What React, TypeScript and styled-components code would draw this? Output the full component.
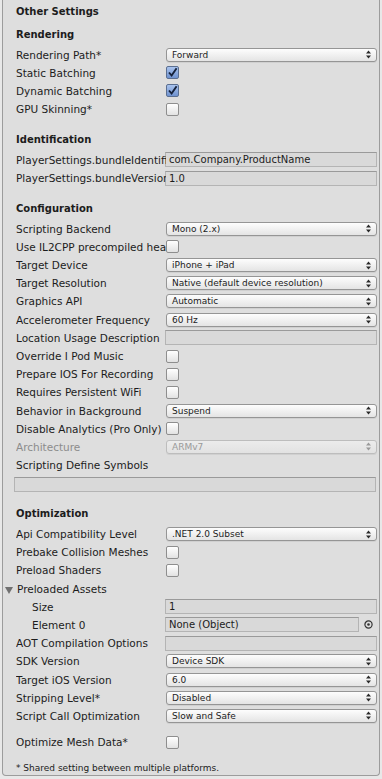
import styled, { createGlobalStyle } from 'styled-components';

const GlobalStyle = createGlobalStyle`
  html, body {
    margin: 0;
    padding: 0;
    background: #e8e8e8;
  }
  body {
    font-family: "DejaVu Sans", "Noto Sans", sans-serif;
    color: #1c1c1c;
  }
`

const Panel = styled.div`
  box-sizing: border-box;
  height: 776px;
  margin: 0 2px;
  padding: 3px 2px 0 13px;
  background: #dedede;
  border: 1px solid #9c9c9c;
  border-top: none;
  border-radius: 0 0 4px 4px;
  overflow: hidden;
`
const Title = styled.div`
  height: 18px;
  line-height: 18px;
  font-size: 10px;
  font-weight: bold;
`
const Section = styled.div<{ $first?: boolean }>`
  margin-top: ${p => (p.$first ? 5 : 13)}px;
`
const SectionHeader = styled.div`
  height: 18px;
  line-height: 18px;
  margin-bottom: 1.5px;
  font-size: 10px;
  font-weight: bold;
`
const Row = styled.div<{ $gap?: number }>`
  display: grid;
  grid-template-columns: 150px 1fr;
  align-items: center;
  height: 18.2px;
  margin-top: ${p => p.$gap ?? 0}px;
`
const Label = styled.div<{ $indent?: number; $dim?: boolean }>`
  position: relative;
  box-sizing: border-box;
  padding-left: ${p => p.$indent ?? 0}px;
  font-size: 10.5px;
  white-space: nowrap;
  overflow: hidden;
  color: ${p => (p.$dim ? '#8c8c8c' : '#1c1c1c')};
`
const Popup = styled.div<{ $dim?: boolean }>`
  display: flex;
  align-items: center;
  justify-content: space-between;
  box-sizing: border-box;
  height: 14px;
  padding: 0 5px 0 5px;
  border: 1px solid ${p => (p.$dim ? '#bdbdbd' : '#959595')};
  border-radius: 3px;
  background: ${p => (p.$dim
    ? 'linear-gradient(#ececec, #e2e2e2)'
    : 'linear-gradient(#fdfdfd, #e4e4e4)')};
  font-size: 9px;
  color: ${p => (p.$dim ? '#9a9a9a' : '#1c1c1c')};
  box-shadow: 0 1px 0 rgba(0, 0, 0, 0.06);
`
const Check = styled.div<{ $on?: boolean }>`
  display: flex;
  align-items: center;
  justify-content: center;
  box-sizing: border-box;
  width: 13px;
  height: 13px;
  border: 1px solid ${p => (p.$on ? '#5b6f91' : '#8e8e8e')};
  border-radius: 2px;
  background: ${p => (p.$on
    ? 'linear-gradient(#a9c3ee, #6f92cf)'
    : 'linear-gradient(#ffffff, #e2e2e2)')};
`
const Field = styled.div<{ $right?: number }>`
  box-sizing: border-box;
  height: 15px;
  margin-left: -1px;
  margin-right: ${p => p.$right ?? 0}px;
  padding-left: 3px;
  line-height: 13px;
  font-size: 10px;
  white-space: nowrap;
  background: #d9d9d9;
  border: 1px solid #b4b4b4;
  border-top-color: #9a9a9a;
`
const WideField = styled(Field)`
  margin: 2px 1px 0 -2px;
`
const FieldWrap = styled.div`
  display: flex;
  align-items: center;
`
const Picker = styled.div`
  display: flex;
  align-items: center;
  justify-content: center;
  width: 18px;
`
const Fold = styled.svg`
  margin-left: -11px;
  margin-right: 4px;
  vertical-align: -1px;
`
const Footnote = styled.div`
  margin-top: 8px;
  height: 18px;
  line-height: 18px;
  font-size: 9px;
`

const Arrows = ({ dim }: { dim?: boolean }) => (
  <svg width="5" height="9" viewBox="0 0 5 9">
    <path d="M0 3.5 L2.5 0.5 L5 3.5 Z M0 5.5 L2.5 8.5 L5 5.5 Z" fill={dim ? '#9a9a9a' : '#2a2a2a'} />
  </svg>
);

const PopupRow = ({ label, value, dim }: { label: string; value: string; dim?: boolean }) => (
  <Row>
    <Label $dim={dim}>{label}</Label>
    <Popup $dim={dim}>
      <span>{value}</span>
      <Arrows dim={dim} />
    </Popup>
  </Row>
);

const CheckRow = ({ label, on, gap }: { label: string; on?: boolean; gap?: number }) => (
  <Row $gap={gap}>
    <Label>{label}</Label>
    <Check $on={on}>
      {on && (
        <svg width="11" height="11" viewBox="0 0 11 11">
          <path d="M2 5.5 L4.6 8.5 L9.6 1.2" fill="none" stroke="#15213a" strokeWidth="1.9" />
        </svg>
      )}
    </Check>
  </Row>
);

const FieldRow = ({ label, value, indent }: { label: string; value?: string; indent?: number }) => (
  <Row>
    <Label $indent={indent}>{label}</Label>
    <Field>{value}</Field>
  </Row>
);

export default function App() {
  return (
    <>
      <GlobalStyle />
      <Panel>
        <Title>Other Settings</Title>

        <Section $first>
          <SectionHeader>Rendering</SectionHeader>
          <PopupRow label="Rendering Path*" value="Forward" />
          <CheckRow label="Static Batching" on />
          <CheckRow label="Dynamic Batching" on />
          <CheckRow label="GPU Skinning*" />
        </Section>

        <Section>
          <SectionHeader>Identification</SectionHeader>
          <FieldRow label="PlayerSettings.bundleIdentifier" value="com.Company.ProductName" />
          <FieldRow label="PlayerSettings.bundleVersion" value="1.0" />
        </Section>

        <Section>
          <SectionHeader>Configuration</SectionHeader>
          <PopupRow label="Scripting Backend" value="Mono (2.x)" />
          <CheckRow label="Use IL2CPP precompiled header" />
          <PopupRow label="Target Device" value="iPhone + iPad" />
          <PopupRow label="Target Resolution" value="Native (default device resolution)" />
          <PopupRow label="Graphics API" value="Automatic" />
          <PopupRow label="Accelerometer Frequency" value="60 Hz" />
          <FieldRow label="Location Usage Description" />
          <CheckRow label="Override I Pod Music" />
          <CheckRow label="Prepare IOS For Recording" />
          <CheckRow label="Requires Persistent WiFi" />
          <PopupRow label="Behavior in Background" value="Suspend" />
          <CheckRow label="Disable Analytics (Pro Only)" />
          <PopupRow label="Architecture" value="ARMv7" dim />
          <Row>
            <Label>Scripting Define Symbols</Label>
          </Row>
          <FieldWrap style={{ height: '18.2px' }}>
            <WideField style={{ flex: 1 }} />
          </FieldWrap>
        </Section>

        <Section>
          <SectionHeader>Optimization</SectionHeader>
          <PopupRow label="Api Compatibility Level" value=".NET 2.0 Subset" />
          <CheckRow label="Prebake Collision Meshes" />
          <CheckRow label="Preload Shaders" />
          <Row>
            <Label style={{ overflow: 'visible' }}>
              <Fold width="8" height="7" viewBox="0 0 8 7">
                <path d="M0 0 L8 0 L4 7 Z" fill="#707070" />
              </Fold>
              Preloaded Assets
            </Label>
          </Row>
          <FieldRow label="Size" value="1" indent={16} />
          <Row>
            <Label $indent={16}>Element 0</Label>
            <FieldWrap>
              <Field style={{ flex: 1 }}>None (Object)</Field>
              <Picker>
                <svg width="9" height="9" viewBox="0 0 9 9">
                  <circle cx="4.5" cy="4.5" r="3.6" fill="none" stroke="#333" strokeWidth="1.2" />
                  <circle cx="4.5" cy="4.5" r="1.3" fill="#333" />
                </svg>
              </Picker>
            </FieldWrap>
          </Row>
          <FieldRow label="AOT Compilation Options" />
          <PopupRow label="SDK Version" value="Device SDK" />
          <PopupRow label="Target iOS Version" value="6.0" />
          <PopupRow label="Stripping Level*" value="Disabled" />
          <PopupRow label="Script Call Optimization" value="Slow and Safe" />
        </Section>

        <CheckRow label="Optimize Mesh Data*" gap={8} />
        <Footnote>* Shared setting between multiple platforms.</Footnote>
      </Panel>
    </>
  );
}
